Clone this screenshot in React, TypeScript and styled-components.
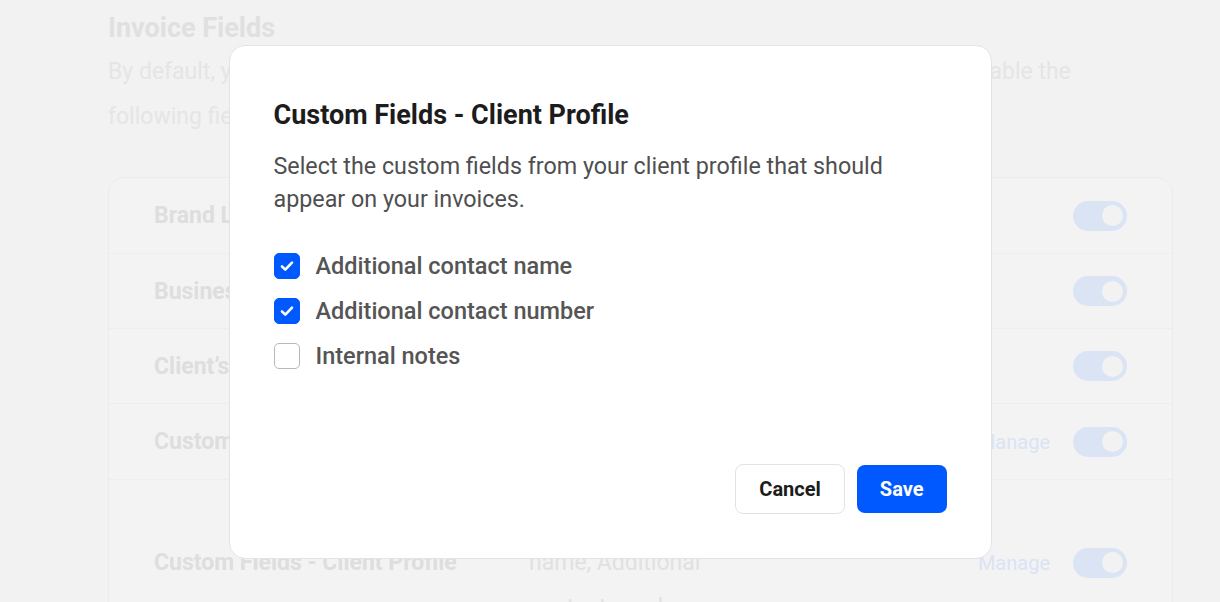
import React from "react";
import styled, { createGlobalStyle } from "styled-components";

const GlobalStyle = createGlobalStyle`
  * { box-sizing: border-box; }
  body {
    margin: 0;
    background: #f2f2f2;
    font-family: Roboto, "Noto Sans", Arial, sans-serif;
  }
`;

const Page = styled.div`
  padding: 12px 47px 0 108px;
  height: 602px;
  overflow: hidden;
`;

const PageTitle = styled.h1`
  margin: 0;
  font-size: 27px;
  line-height: 32px;
  font-weight: 700;
  color: #e0e0e0;
`;

const PageIntro = styled.p`
  margin: 5px 0 0;
  max-width: 990px;
  font-size: 23px;
  line-height: 45px;
  color: #e5e5e5;
`;

const FieldCard = styled.div`
  margin-top: 38px;
  border: 1px solid #ececec;
  border-radius: 16px;
  background: #f3f3f3;
`;

const FieldRow = styled.div`
  display: flex;
  align-items: center;
  min-height: 75px;
  padding: 15px 45px;
  & + & {
    border-top: 1px solid #ededed;
  }
`;

const FieldLabel = styled.div`
  width: 375px;
  flex-shrink: 0;
  font-size: 23px;
  font-weight: 700;
  color: #dedede;
`;

const FieldValue = styled.div`
  flex: 1;
  max-width: 215px;
  font-size: 23px;
  line-height: 45px;
  color: #e1e1e1;
`;

const RowEnd = styled.div`
  margin-left: auto;
  display: flex;
  align-items: center;
  gap: 23px;
`;

const ManageLink = styled.span`
  font-size: 20px;
  color: #dae3f5;
`;

const Toggle = styled.div`
  width: 54px;
  height: 30px;
  border-radius: 15px;
  background: #dae4f4;
  display: flex;
  align-items: center;
  justify-content: flex-end;
  padding-right: 4px;

  &::after {
    content: "";
    width: 21px;
    height: 21px;
    border-radius: 50%;
    background: #f2f2f2;
  }
`;

const Overlay = styled.div`
  position: fixed;
  inset: 0;
  padding-top: 2px;
  display: flex;
  align-items: center;
  justify-content: center;
`;

const Dialog = styled.div`
  width: 763px;
  height: 514px;
  display: flex;
  flex-direction: column;
  padding: 53px 44px 44px;
  background: #ffffff;
  border: 1px solid #e3e3e3;
  border-radius: 16px;
`;

const DialogTitle = styled.h2`
  margin: 0;
  font-size: 27px;
  line-height: 32px;
  font-weight: 700;
  color: #1c1c1c;
`;

const DialogText = styled.p`
  margin: 19px 0 0;
  font-size: 23.3px;
  line-height: 33px;
  color: #4f4f4f;
`;

const OptionList = styled.div`
  margin-top: 27px;
  display: flex;
  flex-direction: column;
`;

const Option = styled.label`
  display: flex;
  align-items: center;
  gap: 16px;
  height: 45px;
  font-size: 23.5px;
  font-weight: 500;
  color: #555555;
`;

const Box = styled.span<{ $checked: boolean }>`
  width: 26px;
  height: 26px;
  flex-shrink: 0;
  border-radius: 5px;
  display: flex;
  align-items: center;
  justify-content: center;
  background: ${(p) => (p.$checked ? "#0059ff" : "#ffffff")};
  border: 1px solid ${(p) => (p.$checked ? "#0059ff" : "#b8b8b8")};
`;

const Actions = styled.div`
  margin-top: auto;
  display: flex;
  justify-content: flex-end;
  align-items: center;
  gap: 12px;
`;

const Button = styled.button<{ $primary?: boolean }>`
  height: ${(p) => (p.$primary ? "48px" : "50px")};
  padding: 0 23px;
  border-radius: 8px;
  font-family: inherit;
  font-size: 20px;
  font-weight: 700;
  cursor: pointer;
  background: ${(p) => (p.$primary ? "#0059ff" : "#ffffff")};
  color: ${(p) => (p.$primary ? "#ffffff" : "#1c1c1c")};
  border: ${(p) => (p.$primary ? "none" : "1px solid #e3e3e3")};
`;

const fields = [
  { label: "Brand Logo" },
  { label: "Business Details" },
  { label: "Client’s Details" },
  { label: "Custom Fields - Job", value: "Job type", manage: true },
  {
    label: "Custom Fields - Client Profile",
    value: "Additional contact name, Additional contact number",
    manage: true,
  },
];

const options = [
  { label: "Additional contact name", checked: true },
  { label: "Additional contact number", checked: true },
  { label: "Internal notes", checked: false },
];

function Check() {
  return (
    <svg width="14" height="12" viewBox="0 0 14 12" fill="none">
      <path
        d="M2 6.5L5.3 9.6L12 2.6"
        stroke="#ffffff"
        strokeWidth="2.6"
        strokeLinecap="round"
        strokeLinejoin="round"
      />
    </svg>
  );
}

export default function App() {
  return (
    <>
      <GlobalStyle />
      <Page>
        <PageTitle>Invoice Fields</PageTitle>
        <PageIntro>
          By default, your invoices include the fields below. You can choose to hide, disable or enable the
          following fields.
        </PageIntro>
        <FieldCard>
          {fields.map((f) => (
            <FieldRow key={f.label}>
              <FieldLabel>{f.label}</FieldLabel>
              {f.value && <FieldValue>{f.value}</FieldValue>}
              <RowEnd>
                {f.manage && <ManageLink>Manage</ManageLink>}
                <Toggle />
              </RowEnd>
            </FieldRow>
          ))}
        </FieldCard>
      </Page>

      <Overlay>
        <Dialog>
          <DialogTitle>Custom Fields - Client Profile</DialogTitle>
          <DialogText>
            Select the custom fields from your client profile that should appear on your invoices.
          </DialogText>
          <OptionList>
            {options.map((o) => (
              <Option key={o.label}>
                <Box $checked={o.checked}>{o.checked && <Check />}</Box>
                {o.label}
              </Option>
            ))}
          </OptionList>
          <Actions>
            <Button>Cancel</Button>
            <Button $primary>Save</Button>
          </Actions>
        </Dialog>
      </Overlay>
    </>
  );
}
